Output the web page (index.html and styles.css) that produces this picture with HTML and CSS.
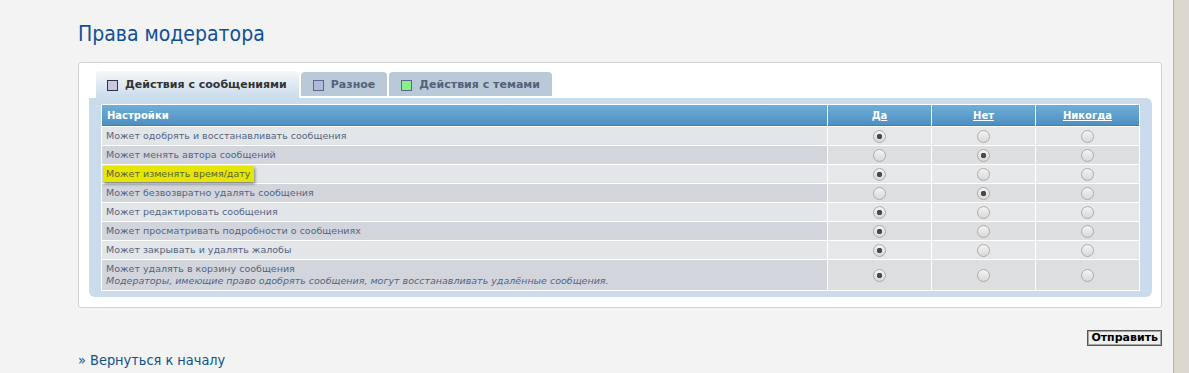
FILE: index.html
```html
<!DOCTYPE html>
<html lang="ru">
<head>
    <meta charset="UTF-8">
    <meta name="viewport" content="width=device-width, initial-scale=1.0">
    <title>Права модератора</title>
    <link rel="stylesheet" href="styles.css">
</head>
<body>
    <div class="page">
        <main class="main">
            <h1 class="page-title">Права модератора</h1>

            <form class="panel">
                <div class="tabs">
                    <a class="tab tab-active" href="#"><span class="swatch swatch-msg"></span>Действия с сообщениями</a>
                    <a class="tab" href="#"><span class="swatch swatch-misc"></span>Разное</a>
                    <a class="tab" href="#"><span class="swatch swatch-topic"></span>Действия с темами</a>
                </div>

                <div class="tab-body">
                    <table class="perms">
                        <thead>
                            <tr>
                                <th class="col-name">Настройки</th>
                                <th class="col-opt"><a href="#">Да</a></th>
                                <th class="col-opt"><a href="#">Нет</a></th>
                                <th class="col-opt"><a href="#">Никогда</a></th>
                            </tr>
                        </thead>
                        <tbody>
                            <tr class="row1">
                                <td class="name">Может одобрять и восстанавливать сообщения</td>
                                <td class="opt"><input type="radio" name="m_approve" checked></td>
                                <td class="opt"><input type="radio" name="m_approve"></td>
                                <td class="opt"><input type="radio" name="m_approve"></td>
                            </tr>
                            <tr class="row2">
                                <td class="name">Может менять автора сообщений</td>
                                <td class="opt"><input type="radio" name="m_chgposter"></td>
                                <td class="opt"><input type="radio" name="m_chgposter" checked></td>
                                <td class="opt"><input type="radio" name="m_chgposter"></td>
                            </tr>
                            <tr class="row1">
                                <td class="name"><span class="marker">Может изменять время/дату</span></td>
                                <td class="opt"><input type="radio" name="m_time" checked></td>
                                <td class="opt"><input type="radio" name="m_time"></td>
                                <td class="opt"><input type="radio" name="m_time"></td>
                            </tr>
                            <tr class="row2">
                                <td class="name">Может безвозвратно удалять сообщения</td>
                                <td class="opt"><input type="radio" name="m_delete"></td>
                                <td class="opt"><input type="radio" name="m_delete" checked></td>
                                <td class="opt"><input type="radio" name="m_delete"></td>
                            </tr>
                            <tr class="row1">
                                <td class="name">Может редактировать сообщения</td>
                                <td class="opt"><input type="radio" name="m_edit" checked></td>
                                <td class="opt"><input type="radio" name="m_edit"></td>
                                <td class="opt"><input type="radio" name="m_edit"></td>
                            </tr>
                            <tr class="row2">
                                <td class="name">Может просматривать подробности о сообщениях</td>
                                <td class="opt"><input type="radio" name="m_info" checked></td>
                                <td class="opt"><input type="radio" name="m_info"></td>
                                <td class="opt"><input type="radio" name="m_info"></td>
                            </tr>
                            <tr class="row1">
                                <td class="name">Может закрывать и удалять жалобы</td>
                                <td class="opt"><input type="radio" name="m_report" checked></td>
                                <td class="opt"><input type="radio" name="m_report"></td>
                                <td class="opt"><input type="radio" name="m_report"></td>
                            </tr>
                            <tr class="row2 row-tall">
                                <td class="name">Может удалять в корзину сообщения<br><span class="explain">Модераторы, имеющие право одобрять сообщения, могут восстанавливать удалённые сообщения.</span></td>
                                <td class="opt"><input type="radio" name="m_softdelete" checked></td>
                                <td class="opt"><input type="radio" name="m_softdelete"></td>
                                <td class="opt"><input type="radio" name="m_softdelete"></td>
                            </tr>
                        </tbody>
                    </table>
                </div>
            </form>

            <div class="submit-row">
                <button class="button" type="button">Отправить</button>
            </div>

            <a class="back-link" href="#">» Вернуться к началу</a>
        </main>
        <div class="scroll-strip"></div>
    </div>
</body>
</html>
```

FILE: styles.css
```css
body {
    margin: 0;
    background-color: #f3f3f3;
    font-family: "DejaVu Sans", Verdana, sans-serif;
    color: #536482;
}

.page {
    display: flex;
    min-height: 373px;
}

.main {
    flex: 1;
    padding: 0 11px 0 78px;
}

.scroll-strip {
    width: 15px;
    background-color: #dcd8d0;
    border-left: 1px solid #b9b5ac;
}

.page-title {
    margin: 22px 0 16px;
    font-family: "DejaVu Sans Condensed", "DejaVu Sans", sans-serif;
    font-size: 21px;
    line-height: 24px;
    font-weight: normal;
    color: #115098;
}

/* white box round the tabs */
.panel {
    background-color: #fff;
    border: 1px solid #d2d2d2;
    border-radius: 3px;
    padding: 8px 9px 10px 10px;
}

.tabs {
    display: flex;
    gap: 2px;
    height: 27px;
    margin-left: 7px;
}

.tab {
    display: flex;
    align-items: flex-start;
    height: 24px;
    margin-top: 1px;
    padding: 6px 12px 0 12px;
    box-sizing: border-box;
    background-color: #b9c9d8;
    border-radius: 4px 4px 0 0;
    font-size: 11px;
    line-height: 14px;
    font-weight: bold;
    color: #56607a;
    text-decoration: none;
}

.tab-active {
    height: 27px;
    margin-top: 0;
    padding-top: 7px;
    padding-left: 11px;
    background: linear-gradient(#f4f7fa, #cadceb);
    color: #333;
}

.swatch {
    width: 9px;
    height: 9px;
    margin: 2px 7px 0 0;
    border: 1px solid #5c6688;
}

.swatch-msg {
    background-color: #c6c9e1;
    border-color: #333340;
}

.swatch-misc {
    background-color: #b3b9da;
}

.swatch-topic {
    background-color: #86f286;
}

.tab-body {
    background-color: #cadceb;
    border-radius: 0 6px 6px 6px;
    padding: 6px 12px;
}

.perms {
    width: 100%;
    border-collapse: separate;
    border-spacing: 1px;
    background-color: #fff;
    font-size: 9.5px;
}

.perms th {
    height: 21px;
    padding: 0 5px;
    background: linear-gradient(#6eaed6, #4d8ec2);
    box-shadow: inset 0 -1px 0 #3f7fb1;
    color: #fff;
    font-size: 10px;
    font-weight: bold;
    line-height: 21px;
}

.col-name {
    text-align: left;
}

.col-opt {
    width: 93px;
    text-align: center;
}

.perms th a {
    color: #fff;
}

.perms td {
    padding: 0 4px;
    line-height: 18px;
}

.row1 .name {
    background-color: #e3e6e9;
}

.row2 .name {
    background-color: #d2d6dc;
}

.row1 .opt {
    background-color: #e5e7e9;
}

.row2 .opt {
    background-color: #dcdee0;
}

.opt {
    text-align: center;
}

.row-tall .name {
    padding-top: 3px;
    padding-bottom: 3px;
    line-height: 12px;
}

.explain {
    font-style: italic;
}

/* yellow marker over one setting */
.marker {
    display: inline-block;
    margin-left: -3px;
    padding: 0 4px 0 3px;
    line-height: 16px;
    background-color: #e6e600;
    box-shadow: 1px 2px 3px rgba(0, 0, 0, 0.45);
    color: #5c6240;
}

.opt input {
    appearance: none;
    -webkit-appearance: none;
    width: 13px;
    height: 13px;
    margin: 0;
    vertical-align: middle;
    border: 1px solid #acacac;
    border-radius: 50%;
    background: linear-gradient(#f3f3f3, #d9d9d9);
}

.opt input:checked {
    background: radial-gradient(circle, #4a4a4a 0, #4a4a4a 2.5px, transparent 3px), linear-gradient(#f3f3f3, #d9d9d9);
}

.submit-row {
    display: flex;
    justify-content: flex-end;
    margin-top: 22px;
}

.button {
    height: 16px;
    padding: 0 3px;
    border: 1px solid #555;
    box-shadow: inset 0 0 0 1px #a6a6a6;
    background-color: #efefef;
    font-family: "DejaVu Sans", Verdana, sans-serif;
    font-size: 11px;
    font-weight: bold;
    line-height: 12px;
    color: #000;
}

.back-link {
    display: inline-block;
    margin-top: 6px;
    font-family: "DejaVu Sans Condensed", "DejaVu Sans", sans-serif;
    font-size: 14.4px;
    line-height: 16px;
    color: #105289;
    text-decoration: none;
}
```
